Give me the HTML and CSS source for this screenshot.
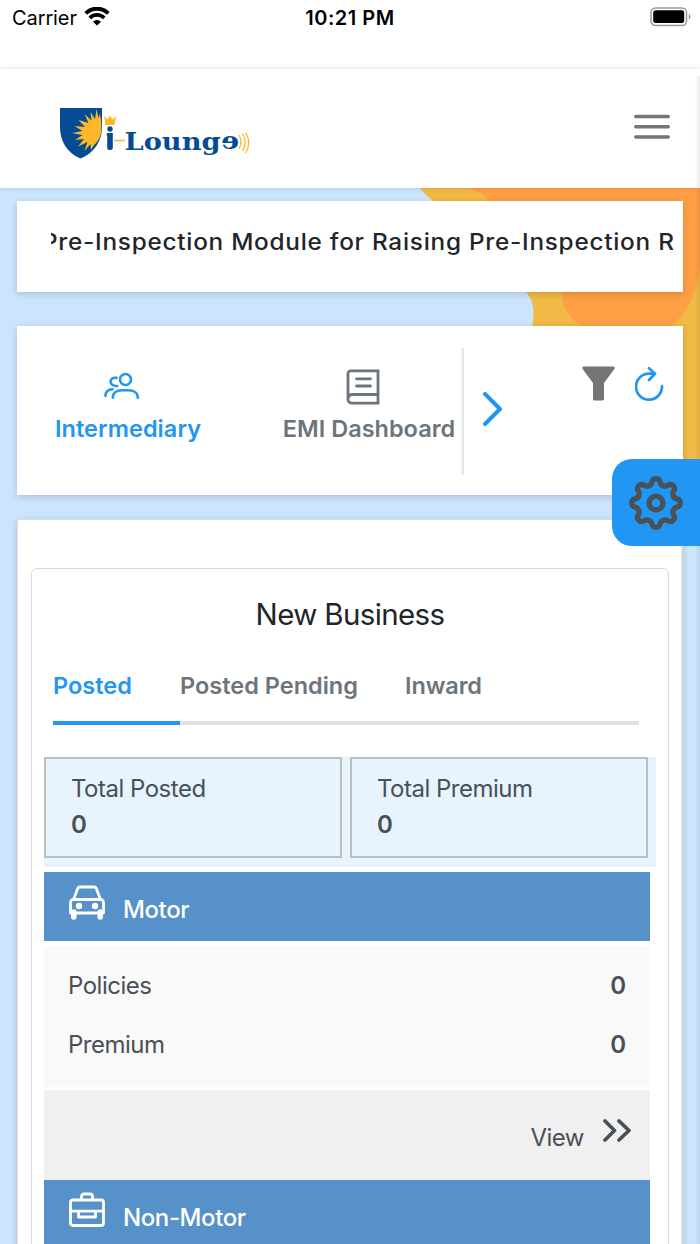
FILE: index.html
```html
<!DOCTYPE html>
<html lang="en">
<head>
<meta charset="utf-8">
<title>i-Lounge</title>
<link rel="stylesheet" href="styles.css">
</head>
<body>
<div class="phone">
  <svg class="backdrop" viewBox="0 0 700 360" width="700" height="360">
    <path d="M419 187C425 194 432 202 446 208C466 219 515 279 526 292C535 302 535 316 531 330V350H683V520H700V187Z" fill="#f1b945"/>
    <path d="M468 187C475 193 486 193 488 201L561 285C560 308 571 320 586 330H665C686 318 697 293 700 268V187Z" fill="#ff9f46"/>
  </svg>
  <div class="status">
    <div class="carrier"><span>Carrier</span>
      <svg width="26" height="19" viewBox="0 0 26 19"><path d="M1.700 6.300A16 16 0 0 1 24.300 6.300" fill="none" stroke="#000" stroke-width="4"/><path d="M5.800 11A10 10 0 0 1 20.200 11" fill="none" stroke="#000" stroke-width="3.700"/><path d="M9 14.700A5.300 5.300 0 0 1 17 14.700L13 18.600Z"/></svg>
    </div>
    <div class="clock">10:21 PM</div>
    <svg class="battery" width="42" height="20" viewBox="0 0 42 20"><rect x="1" y="1" width="35.500" height="17.500" rx="4.500" fill="#fff" stroke="#999" stroke-width="1.500"/><rect x="3.200" y="3.300" width="31" height="12.800" rx="2.500"/><path d="M38.800 6.800q3.200 3 0 6z" fill="#888"/></svg>
  </div>
  <header class="header">
    <svg class="logo" viewBox="0 0 192 54" width="192" height="54">
      <path d="M1 1H43V20C43 36 33 47 21.500 51.500C8 46 1 34 1 20Z" fill="#044b94"/>
      <path d="M42 12.500L40.500 6.500L39.500 11.500L37.500 2L36 12L31.500 5L32.500 13.500L25.500 7L29.500 16L19.500 13L26 20L15.500 19L23.500 24L13 26L23.500 28L16 33L25 32L19 39.500L28.500 35L25.500 44L31.500 37L32 43L35 38C40 34 42 29 42.500 22Z" fill="#fdb827"/>
      <path d="M45 9L48.200 12.500L51 8.500L53.500 12.500L57 9L55.500 18H46.500Z" fill="#fdb827"/>
      <circle cx="51" cy="22" r="2.700" fill="#044b94"/>
      <path d="M47.800 26H53.800V41.500A3 2.500 0 0 1 48.200 41.500V29H47.800Z" fill="#044b94"/>
      <path d="M55 33.500H66" stroke="#fdb827" stroke-width="1.500"/>
      <text class="wordmark" x="65.500" y="43" textLength="96" lengthAdjust="spacingAndGlyphs">Loung</text>
      <text class="wordmark" transform="translate(180 41.500) scale(-1.150 1)">e</text>
      <path d="M180 28Q184 34 180 42M183.500 26.500Q189 35 183.500 44M186.500 25.500Q193 36 186.500 46" fill="none" stroke="#fdb827" stroke-width="1.300"/>
    </svg>
    <svg class="menu" width="36" height="26" viewBox="0 0 36 26"><path d="M1.700 2.500H34.300M1.700 12.800H34.300M1.700 23H34.300" stroke="#757575" stroke-width="3.400" stroke-linecap="round"/></svg>
  </header>
  <main class="page">
    <section class="card ticker"><div class="ticker-window"><span class="ticker-text">Pre-Inspection Module for Raising Pre-Inspection R</span></div></section>
    <section class="card nav">
      <div class="nav-tabs">
        <div class="nav-tab active">
          <svg width="36" height="36" viewBox="0 0 36 36" fill="none" stroke="currentColor" stroke-width="2.600" stroke-linecap="round"><circle cx="21.500" cy="10.500" r="5.500"/><path d="M8.800 28.800C8.800 24 12.500 21.300 18 21.300H24.500C30 21.300 33.800 24 33.800 28.800M12.500 8.900C4.500 7.500 4.500 17.700 13.200 17M1.500 27C1.500 22.500 3.500 20.500 8.500 20.300"/></svg>
          <span class="intermediary">Intermediary</span>
        </div>
        <div class="nav-tab emi">
          <svg width="36" height="36" viewBox="0 0 36 36" fill="none" stroke="currentColor" stroke-width="2.800" stroke-linecap="round"><path d="M5 1.800H32V34.200H6C3.500 34.200 2 32.500 2 30.500V5C2 3 3 1.800 5 1.800ZM32 25.500H6.500C3.800 25.500 2 27 2 30M10.500 9.800H24.500M10.500 17H24.500"/></svg>
          <span class="emi-label">EMI Dashboard</span>
        </div>
      </div>
      <div class="next"><svg width="20" height="34" viewBox="0 0 20 34"><path d="M2 2L17 17L2 32" fill="none" stroke="#2196f3" stroke-width="4" stroke-linecap="round" stroke-linejoin="round"/></svg></div>
      <div class="tools">
        <svg width="33" height="36" viewBox="0 0 33 36"><path d="M1.800 .5H31.200Q33.500 .5 32.200 3.300L22 17V33Q22 34.500 20.500 34.500H12.500Q11 34.500 11 33V17L.8 3.300Q-.5 .5 1.800 .5Z" fill="#757575"/></svg>
        <svg width="30" height="36" viewBox="0 0 30 36"><path d="M20 7.700H14.500A13 13 0 1 0 27 20M14 2.200L20 7.700L14 14" fill="none" stroke="#2196f3" stroke-width="2.700" stroke-linecap="round" stroke-linejoin="round"/></svg>
      </div>
    </section>
    <section class="card dashboard">
      <div class="panel">
        <h1 class="title"><span>New Business</span></h1>
        <div class="tabs">
          <div class="tab selected"><span>Posted</span></div>
          <div class="tab pending"><span>Posted Pending</span></div>
          <div class="tab"><span class="inward">Inward</span></div>
        </div>
        <div class="totals">
          <div class="total"><span>Total Posted</span><b>0</b></div>
          <div class="total"><span>Total Premium</span><b>0</b></div>
        </div>
        <div class="bar">
          <svg width="36" height="36" viewBox="0 0 36 36" fill="none" stroke="#fff" stroke-width="2.800" stroke-linejoin="round"><path d="M4.800 14L8.500 4Q9.200 2 11 2H25Q27 2 27.500 4L31.300 14M3.500 14.500H32.500Q34.500 15.500 34.500 18V28H1.500V18Q1.500 15.500 3.500 14.500Z"/><circle cx="10" cy="21" r="3.200" fill="#fff" stroke="none"/><circle cx="26" cy="21" r="3.200" fill="#fff" stroke="none"/><path d="M4.800 27V32M31.200 27V32" stroke-width="5.500" stroke-linecap="round"/></svg>
          <span class="motor">Motor</span>
        </div>
        <div class="details">
          <div class="row"><span>Policies</span><b>0</b></div>
          <div class="row"><span>Premium</span><b>0</b></div>
        </div>
        <div class="view"><span>View</span><svg width="28" height="24" viewBox="0 0 28 24"><path d="M2 2L11.500 11.500L2 21M16 2L26 11.500L16 21" fill="none" stroke="#495057" stroke-width="3.700" stroke-linecap="round" stroke-linejoin="round"/></svg></div>
        <div class="bar non">
          <svg width="36" height="36" viewBox="0 0 36 36" fill="none" stroke="#fff" stroke-width="2.800" stroke-linejoin="round"><rect x="1.500" y="8" width="33" height="25.500" rx="2.500"/><path d="M12.500 8V4.500Q12.500 2 15 2H21Q23.500 2 23.500 4.500V8M1.500 19.200H34.500M9.500 19.200V25H26.500V19.200"/></svg>
          <span class="nonmotor">Non-Motor</span>
        </div>
      </div>
    </section>
  </main>
  <div class="edge"></div>
  <div class="settings"><svg width="56" height="56" viewBox="-27.500 -27.500 55 55" fill="none" stroke="#495057" stroke-width="5.200" stroke-linejoin="round"><circle r="6.800"/><path d="M20.600-4A4.100 4.100 0 0 1 20.600 4A5 5 0 0 0 17.400 11.700A4.100 4.100 0 0 1 11.700 17.400A5 5 0 0 0 4 20.600A4.100 4.100 0 0 1-4 20.600A5 5 0 0 0-11.700 17.400A4.100 4.100 0 0 1-17.400 11.700A5 5 0 0 0-20.600 4A4.100 4.100 0 0 1-20.600-4A5 5 0 0 0-17.400-11.700A4.100 4.100 0 0 1-11.700-17.400A5 5 0 0 0-4-20.600A4.100 4.100 0 0 1 4-20.600A5 5 0 0 0 11.700-17.400A4.100 4.100 0 0 1 17.400-11.700A5 5 0 0 0 20.600-4Z"/></svg></div>
</div>
</body>
</html>
```

FILE: styles.css
```css
* { box-sizing: border-box; }
body { margin: 0; font-family: Inter, "Liberation Sans", sans-serif; }
svg { display: block; flex: none; }
.phone { position: relative; width: 700px; height: 1244px; overflow: hidden; background: #cbe5fd; }
.backdrop { position: absolute; top: 0; left: 0; overflow: visible; }
.status { position: relative; height: 69px; background: #fff; padding: 8px 9px 0 12px; display: grid; grid-template-columns: 1fr auto 1fr; align-items: start; font-size: 20px; line-height: 20px; }
.carrier { display: flex; gap: 8px; letter-spacing: -.1px; }
.carrier svg { margin: -1px 0 0 -1px; }
.clock { font-weight: 600; font-size: 20px; letter-spacing: .5px; margin-left: -3px; }
.battery { justify-self: end; margin: -1px -1px 0 0; }
.header { position: relative; height: 119px; background: #fff; padding: 0 30px 0 59px; display: flex; justify-content: space-between; align-items: center; box-shadow: 0 0 6px rgba(0,0,0,.14); }
.logo { margin-top: 10px; overflow: visible; }
.wordmark { font: bold 24.5px "DejaVu Serif", serif; fill: #044b94; }
.menu { margin-top: -4px; }
.page { position: relative; padding: 13px 17px 0; }
.card { background: #fff; box-shadow: 0 2px 7px rgba(0,0,0,.16); }
.ticker { height: 91px; padding: 25px 6px 0 34px; }
.ticker-window { overflow: hidden; height: 32px; display: flex; }
.ticker-text { margin-left: -9px; white-space: nowrap; font-size: 22.5px; line-height: 32px; font-weight: 450; color: #212529; letter-spacing: .7px; transform: scaleX(1.08); transform-origin: 0 0; }
.nav { height: 169px; margin-top: 34px; display: flex; }
.nav-tabs { width: 447px; height: 127px; margin-top: 22px; padding: 21px 0 0 38px; display: flex; gap: 82px; border-right: 1px solid #e2e2e2; box-shadow: inset -3px 0 3px -2px rgba(0,0,0,.1); }
.nav-tab { display: flex; flex-direction: column; align-items: center; gap: 9px; color: #6c757d; font-size: 23.5px; line-height: 30px; font-weight: 600; white-space: nowrap; }
.active { color: #2196f3; width: 146px; letter-spacing: .07px; }
.active svg { position: relative; left: -6px; }
.active span { height: 28px; overflow: hidden; }
.emi { width: 172px; }
.emi svg { position: relative; left: -5px; }
.next { padding: 66px 0 0 19px; width: 118px; }
.tools { padding-top: 40px; display: flex; gap: 20px; }
.dashboard { height: 760px; margin-top: 24px; border: 1.500px solid #dedede; border-right-width: 2px; padding: 48px 12px 0 13px; }
.panel { height: 720px; border: 1px solid #d5dbe1; border-radius: 6px; padding: 28px 12px 0; color: #495057; font-size: 24px; letter-spacing: -.5px; }
.title { margin: 0; text-align: center; font-size: 29.5px; line-height: 34px; font-weight: 400; color: #212529; letter-spacing: -.65px; }
.tabs { margin: 40px 17px 0 9px; height: 54px; border-bottom: 4px solid #dee2e6; display: flex; font-size: 23.5px; line-height: 30px; font-weight: 600; color: #6c757d; white-space: nowrap; letter-spacing: 0; }
.tab { height: 54px; }
.selected { width: 127px; color: #2196f3; border-bottom: 4px solid #2196f3; }
.pending { width: 225px; }
.inward { letter-spacing: -.1px; }
.totals { margin-top: 32px; width: 612px; height: 110px; background: #e7f4fe; display: flex; gap: 8px; }
.total { width: 298px; height: 101px; border: 2px solid #bdbebe; padding: 12px 25px; line-height: 35.5px; display: flex; flex-direction: column; }
b { font-weight: 600; letter-spacing: 0; }
.bar { margin-top: 5px; width: 606px; height: 69px; background: #5691c9; color: #fff; padding: 13px 25px 0; display: flex; gap: 18px; font-weight: 500; line-height: 49px; letter-spacing: -.4px; }
.details { margin-top: 5px; width: 606px; height: 141px; background: #f9f9f9; padding: 10px 24px 0; }
.row { display: flex; justify-content: space-between; line-height: 59px; }
.view { margin-top: 3px; width: 606px; height: 90px; background: #f0f0f0; display: flex; justify-content: flex-end; padding: 29px 19px 0 0; gap: 19px; line-height: 37px; }
.bar.non { margin-top: 0; padding-top: 12px; line-height: 51px; }
.settings { position: absolute; left: 612px; top: 459px; width: 88px; height: 87px; background: #2196f3; border-radius: 20px 0 0 20px; padding: 15.5px 16px; }
.edge { position: absolute; left: 695px; top: 76px; width: 5px; bottom: 0; background: linear-gradient(90deg, transparent, rgba(0,0,0,.08)); }
```
